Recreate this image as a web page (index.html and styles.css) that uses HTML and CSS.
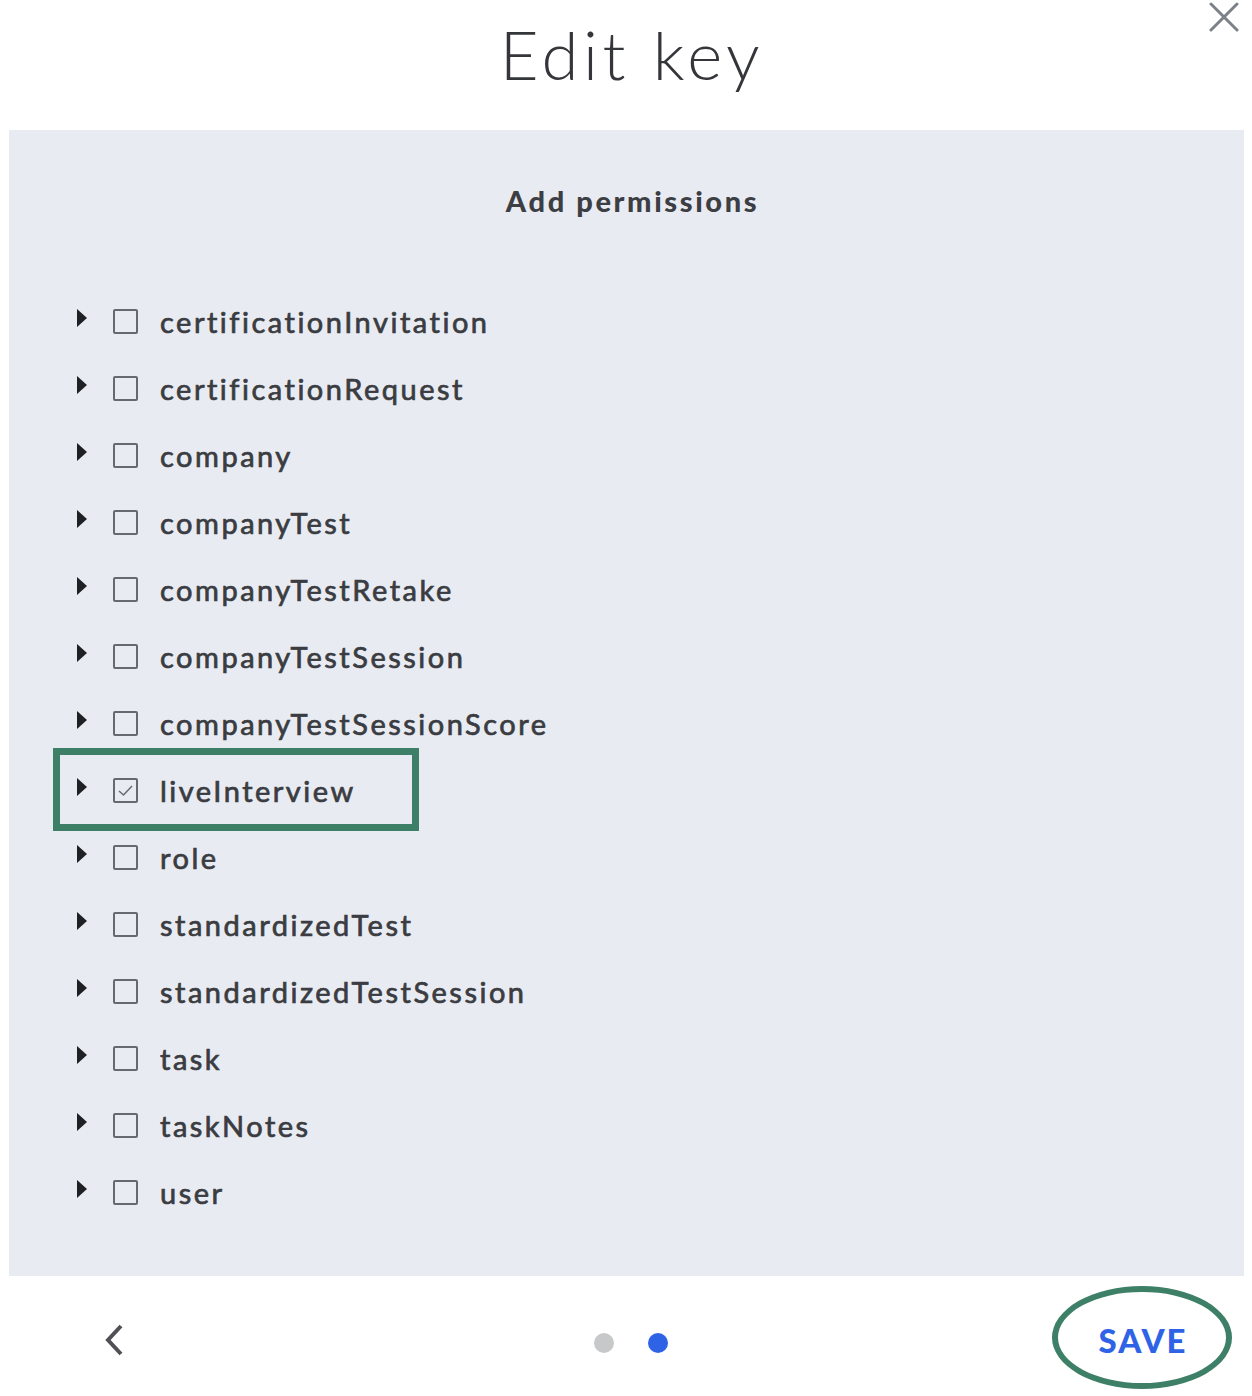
FILE: index.html
```html
<!DOCTYPE html>
<html lang="en">
<head>
  <meta charset="UTF-8">
  <title>Edit key</title>
  <link rel="stylesheet" href="styles.css">
</head>
<body>
  <div class="modal">
    <header class="modal-head">
      <h1>Edit key</h1>
      <button class="close" aria-label="Close">
        <svg width="30" height="30" viewBox="0 0 30 30"><path d="M2 2 L28 28 M28 2 L2 28" stroke="#7b8089" stroke-width="3" stroke-linecap="round"/></svg>
      </button>
    </header>

    <section class="panel">
      <h2>Add permissions</h2>
      <ul class="tree">
        <li class="node"><span class="caret"></span><span class="box"></span><span class="label">certificationInvitation</span></li>
        <li class="node"><span class="caret"></span><span class="box"></span><span class="label">certificationRequest</span></li>
        <li class="node"><span class="caret"></span><span class="box"></span><span class="label">company</span></li>
        <li class="node"><span class="caret"></span><span class="box"></span><span class="label">companyTest</span></li>
        <li class="node"><span class="caret"></span><span class="box"></span><span class="label">companyTestRetake</span></li>
        <li class="node"><span class="caret"></span><span class="box"></span><span class="label">companyTestSession</span></li>
        <li class="node"><span class="caret"></span><span class="box"></span><span class="label">companyTestSessionScore</span></li>
        <li class="node marked"><span class="caret"></span><span class="box checked"><svg width="17" height="13" viewBox="0 0 17 13"><path d="M2 7 L6.5 11 L15 2" fill="none" stroke="#6a6d72" stroke-width="1.6"/></svg></span><span class="label">liveInterview</span></li>
        <li class="node"><span class="caret"></span><span class="box"></span><span class="label">role</span></li>
        <li class="node"><span class="caret"></span><span class="box"></span><span class="label">standardizedTest</span></li>
        <li class="node"><span class="caret"></span><span class="box"></span><span class="label">standardizedTestSession</span></li>
        <li class="node"><span class="caret"></span><span class="box"></span><span class="label">task</span></li>
        <li class="node"><span class="caret"></span><span class="box"></span><span class="label">taskNotes</span></li>
        <li class="node"><span class="caret"></span><span class="box"></span><span class="label">user</span></li>
      </ul>
    </section>

    <footer class="modal-foot">
      <button class="back" aria-label="Back">
        <svg width="24" height="34" viewBox="0 0 24 34"><path d="M19 3 L6 17 L19 31" fill="none" stroke="#4f5156" stroke-width="4"/></svg>
      </button>
      <div class="dots">
        <span class="dot"></span>
        <span class="dot active"></span>
      </div>
      <button class="save">SAVE</button>
    </footer>
  </div>
</body>
</html>
```

FILE: styles.css
```css
:root {
  --panel: #e8ebf1;
  --texto: #3a3c41;
  --verde: #3e7f68;
  --azul: #2f63e6;
}
body {
  margin: 0;
  padding: 0;
  background: #ffffff;
  font-family: Lato, "Open Sans", sans-serif;
  color: var(--texto);
}
.modal {
  width: 1252px;
}
.modal-head {
  height: 130px;
  display: flex;
  justify-content: center;
  position: relative;
}
.modal-head h1 {
  margin: 0 0 0 12px;
  padding-top: 14px;
  font-size: 67px;
  font-weight: 300;
  letter-spacing: 4.6px;
  line-height: 80px;
  color: #35363a;
}
.close {
  position: absolute;
  top: 2px;
  right: 13px;
  background: none;
  border: none;
  padding: 0;
  cursor: pointer;
}
.panel {
  margin: 0 8px 0 9px;
  background: var(--panel);
  padding: 51px 0 50px 68px;
}
.panel h2 {
  margin: 0 0 67px -56px;
  text-align: center;
  font-size: 29px;
  line-height: 40px;
  font-weight: 900;
  letter-spacing: 2.6px;
  color: #3c3e43;
}
.tree {
  list-style: none;
  margin: 0;
  padding: 0;
}
.node {
  height: 67px;
  display: flex;
  align-items: center;
  position: relative;
}
.caret {
  width: 0;
  height: 0;
  border-top: 9px solid transparent;
  border-bottom: 9px solid transparent;
  border-left: 10px solid #1f2024;
  margin-top: -7px;
  margin-right: 26px;
}
.box {
  width: 21px;
  height: 21px;
  border: 2px solid #66696e;
  border-radius: 2px;
  margin-right: 22px;
  display: flex;
  align-items: center;
  justify-content: center;
}
.label {
  font-size: 29px;
  letter-spacing: 2.5px;
  -webkit-text-stroke: 0.7px currentColor;
}
.marked::before {
  content: "";
  position: absolute;
  left: -24px;
  top: -9px;
  width: 352px;
  height: 69px;
  border: 7px solid var(--verde);
}
.modal-foot {
  height: 121px;
  display: flex;
  align-items: center;
  justify-content: space-between;
  padding: 0 20px 0 102px;
  box-sizing: border-box;
  position: relative;
}
.back {
  background: none;
  border: none;
  padding: 0;
  cursor: pointer;
  margin-top: 10px;
}
.dots {
  position: absolute;
  left: 594px;
  top: 57px;
  display: flex;
  gap: 34px;
}
.dot {
  width: 20px;
  height: 20px;
  border-radius: 50%;
  background: #c7c8ca;
}
.dot.active {
  background: var(--azul);
}
.save {
  width: 180px;
  height: 103px;
  box-sizing: border-box;
  border: 6px solid var(--verde);
  border-radius: 50%;
  background: none;
  color: var(--azul);
  font-family: Lato, sans-serif;
  font-weight: 900;
  font-size: 33px;
  letter-spacing: 2px;
  cursor: pointer;
  margin-top: 2px;
  padding: 4px 0 0 2px;
}
```
